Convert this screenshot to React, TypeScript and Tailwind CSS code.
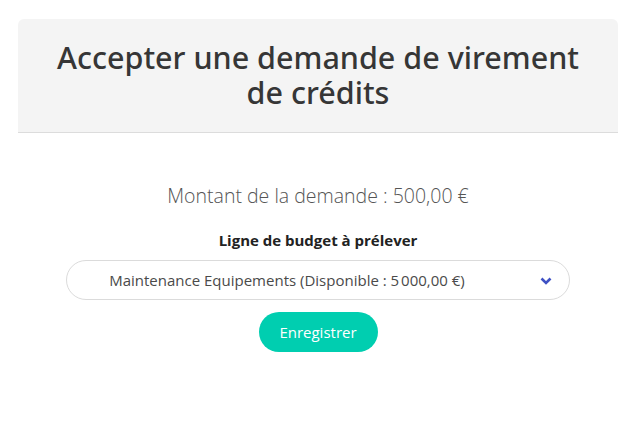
import React from "react";

export default function App() {
  return (
    <div className="min-h-[422px] bg-white pt-[19px] px-[18px]" style={{ fontFamily: '"Open Sans", "Noto Sans", sans-serif' }}>
      <div className="w-[600px] rounded-t-[6px] bg-white">
        <div className="bg-[#f4f4f4] rounded-t-[6px] border-b border-[#dcdcdc] pt-[21px] pb-[22px] px-[20px] text-center">
          <h1
            className="text-[30.5px] leading-[35px] text-[#363636] font-medium tracking-[0px]"
            style={{ fontFamily: '"Noto Sans", "Open Sans", sans-serif' }}
          >
            Accepter une demande de virement
            <br />
            de crédits
          </h1>
        </div>
        <div className="flex flex-col items-center pt-[50px]">
          <p className="text-[19.5px] leading-[26px] text-[#555] font-light">
            Montant de la demande : 500,00 €
          </p>
          <p className="mt-[20px] text-[15px] leading-[22px] font-bold text-[#222]">
            Ligne de budget à prélever
          </p>
          <div className="mt-[9px] w-[504px] h-[40px] rounded-full border border-[#dbdbdb] flex items-center relative">
            <span className="flex-1 text-center pr-[62px] text-[15px] text-[#4a4a4a]">
              Maintenance Equipements (Disponible : 5{"\u202F"}000,00 €)
            </span>
            <svg className="absolute right-[16px] top-[15px]" width="14" height="10" viewBox="0 0 14 10">
              <path d="M2.5 2.5 L7 7 L11.5 2.5" fill="none" stroke="#3f51c4" strokeWidth="2.6" strokeLinecap="butt" />
            </svg>
          </div>
          <button className="mt-[12px] h-[40px] w-[119px] rounded-full bg-[#00ceb0] text-white text-[15px]">
            Enregistrer
          </button>
        </div>
      </div>
    </div>
  );
}
